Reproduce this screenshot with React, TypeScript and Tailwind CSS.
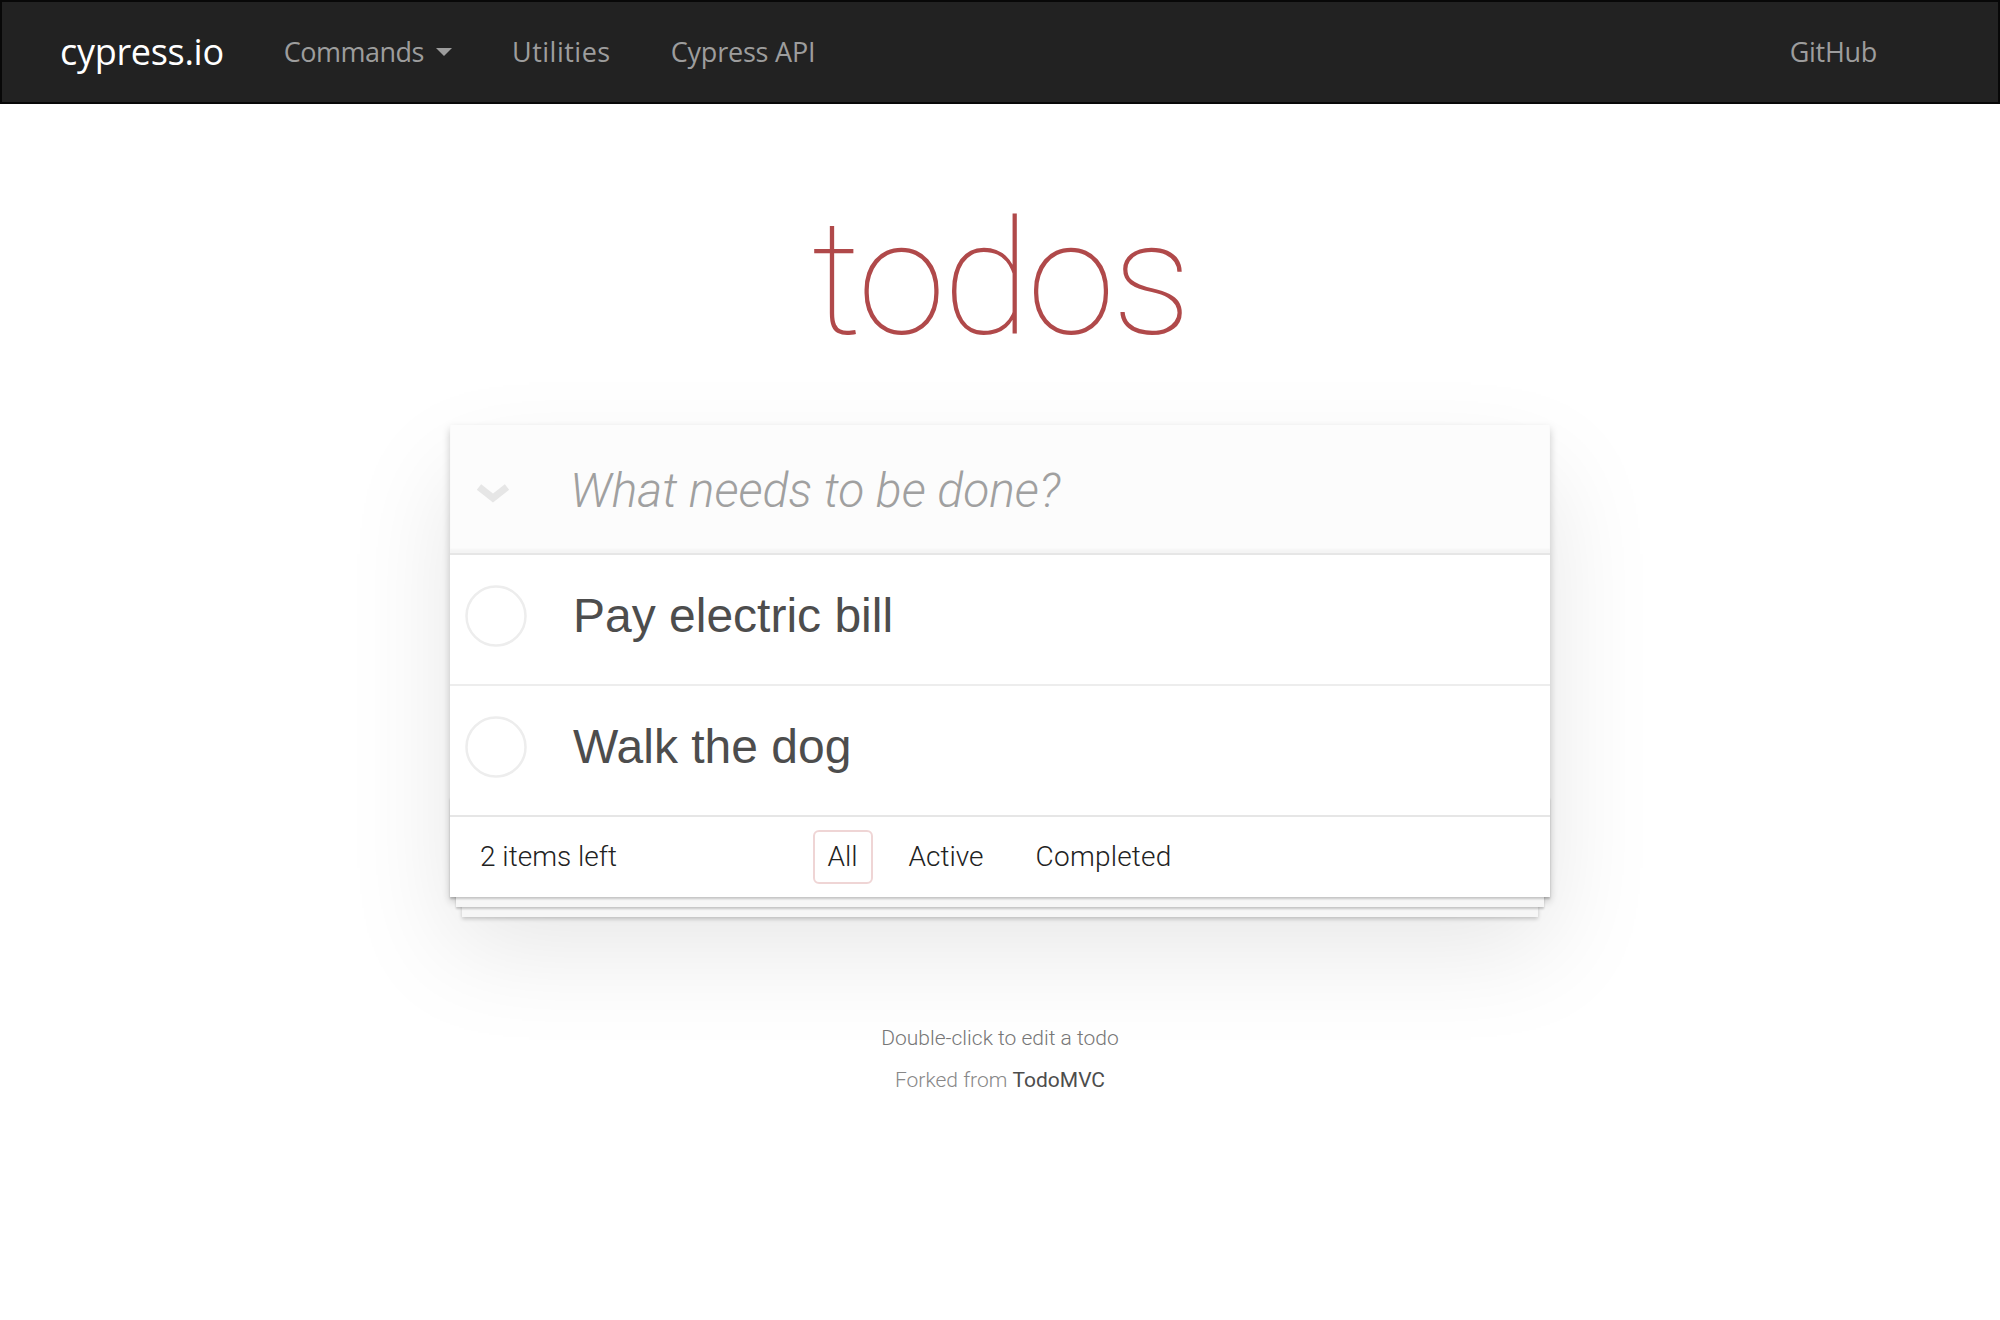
import React from "react";

const navFont = { fontFamily: '"Open Sans", "Noto Sans", sans-serif' };

function Circle() {
  return (
    <svg width="62" height="62" viewBox="0 0 62 62">
      <circle cx="31" cy="31" r="29.5" fill="none" stroke="#ededed" strokeWidth="2.5" />
    </svg>
  );
}

function Row({ text, last }: { text: string; last?: boolean }) {
  return (
    <li
      className={`flex items-center pb-[8px] ${last ? "h-[129px]" : "h-[131px] border-b-2 border-[#ededed]"}`}
    >
      <div className="ml-[15px] w-[62px] flex items-center justify-center">
        <Circle />
      </div>
      <span className="ml-[46px] text-[48px] text-[#4d4d4d] font-['Liberation_Sans',Arial,sans-serif]">
        {text}
      </span>
    </li>
  );
}

export default function App() {
  return (
    <div className="min-h-screen bg-white">
      <nav
        className="h-[104px] bg-[#222222] border-2 border-[#080808] flex items-center"
        style={navFont}
      >
        <a className="pl-[58px] pr-[30px] text-[36px] text-white tracking-[-0.3px]">cypress.io</a>
        <ul className="flex items-center text-[27px] text-[#9d9d9d]">
          <li className="px-[30px] flex items-center tracking-[-0.5px]">
            Commands
            <span className="ml-[12px] w-0 h-0 border-t-[8px] border-t-[#9d9d9d] border-x-[8px] border-x-transparent" />
          </li>
          <li className="px-[30px] tracking-[0.5px]">Utilities</li>
          <li className="px-[30px] tracking-[-0.2px]">Cypress API</li>
        </ul>
        <div className="ml-auto pr-[121px] text-[27px] tracking-[-0.3px] text-[#9d9d9d]">GitHub</div>
      </nav>

      <main className="w-[1100px] mx-auto font-['Roboto',sans-serif]">
        <h1 className="mt-[95px] mb-[66px] h-[160px] leading-[160px] text-center text-[160px] font-thin text-[#b0494a] tracking-[-3px]">
          todos
        </h1>

        <section className="relative bg-white shadow-[0_4px_8px_0_rgba(0,0,0,0.2),0_50px_100px_0_rgba(0,0,0,0.1)]">
          <div className="h-[130px] flex items-center pt-[4px] bg-[#fcfcfc] border-b-2 border-[#e6e6e6] shadow-[inset_0_-4px_2px_rgba(0,0,0,0.03)]">
            <div className="w-[120px] pl-[26px] pt-[6px] flex items-center">
              <svg width="34" height="22" viewBox="0 0 34 22">
                <path d="M3 4 L17 15 L31 4" fill="none" stroke="#e6e6e6" strokeWidth="7" strokeLinejoin="miter" />
              </svg>
            </div>
            <input
              className="flex-1 bg-transparent outline-none text-[48px] italic font-light text-[#4d4d4d] placeholder:text-[#a0a0a0] placeholder:italic"
              placeholder="What needs to be done?"
            />
          </div>

          <ul>
            <Row text="Pay electric bill" />
            <Row text="Walk the dog" last />
          </ul>

          <footer className="relative h-[82px] border-t-2 border-[#e6e6e6] grid grid-cols-[1fr_auto_1fr] items-center text-[28px] font-light text-[#222]">
            <div
              className="absolute left-0 right-0 bottom-0 h-[100px] pointer-events-none shadow-[0_2px_2px_rgba(0,0,0,0.2),0_16px_0_-6px_#f6f6f6,0_18px_2px_-6px_rgba(0,0,0,0.2),0_32px_0_-12px_#f6f6f6,0_34px_4px_-12px_rgba(0,0,0,0.2)]"
            />
            <span className="pl-[30px] relative">2 items left</span>
            <ul className="flex items-center relative">
              <li className="mx-[10px] px-[13px] py-[4px] border-2 border-[rgba(175,47,47,0.2)] rounded-[6px]">All</li>
              <li className="mx-[10px] px-[14px] py-[4px] border-2 border-transparent">Active</li>
              <li className="mx-[10px] px-[14px] py-[4px] border-2 border-transparent tracking-[0.2px]">Completed</li>
            </ul>
            <span />
          </footer>
        </section>

        <div className="text-center text-[21px] font-light text-[#777] [text-shadow:0_2px_0_rgba(255,255,255,0.5)]">
          <p className="mt-[130px] leading-[22px]">Double-click to edit a todo</p>
          <p className="mt-[20px] leading-[22px] text-[#888]">
            Forked from <span className="text-[#4d4d4d] font-normal">TodoMVC</span>
          </p>
        </div>
      </main>
    </div>
  );
}
